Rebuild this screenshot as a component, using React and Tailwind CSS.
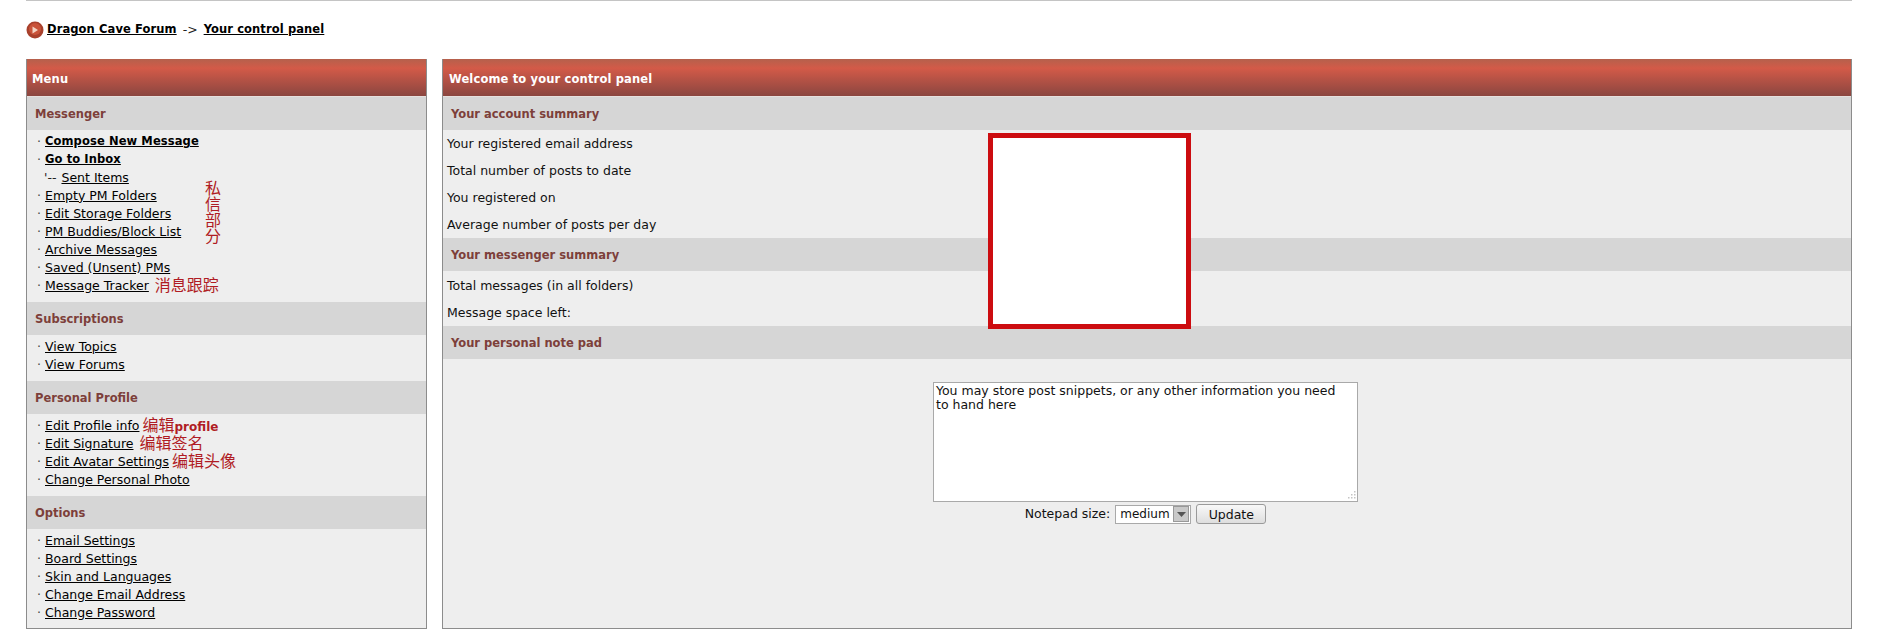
import React from 'react';

const sansFont = "font-['DejaVu_Sans','Noto_Sans_CJK_SC',sans-serif]";

const Link = ({ children, bold }) => (
    <a className={`text-black underline ${bold ? 'text-[11.5px] font-bold tracking-[0.1px]' : ''}`}>{children}</a>
);

const Note = ({ children, gap = 'ml-[6px]' }) => (
    <span className={`${gap} text-[16px] leading-[14px] text-[#b01c24]`}>{children}</span>
);

const MenuItem = ({ children, bold, note, noteGap }) => (
    <div className="flex h-[18px] items-center whitespace-nowrap pl-[10px]">
        <span className="w-[8px] text-[#444]">·</span>
        <Link bold={bold}>{children}</Link>
        {note && <Note gap={noteGap}>{note}</Note>}
    </div>
);

const SubHeader = ({ children, className = '' }) => (
    <div className={`flex h-[33px] items-center bg-[#d6d6d6] pl-[8px] pt-[3px] text-[11.5px] font-bold text-[#7d3f3a] ${className}`}>{children}</div>
);

const PanelHeader = ({ children, className = '' }) => (
    <div className={`flex h-[38px] items-center border-b border-[#e6e0de] bg-gradient-to-b from-[#b5604c] from-0% via-[#d35a48] via-25% to-[#8b4640] to-100% pt-[4px] text-[11.5px] font-bold tracking-[0.15px] text-white ${className}`}>{children}</div>
);

const Row = ({ children, className = 'h-[27px]' }) => (
    <div className={`flex items-center pl-[4px] text-[#111] ${className}`}>{children}</div>
);

export default function App() {
    return (
        <div className={`relative h-[634px] w-[1878px] overflow-hidden bg-white px-[26px] text-[12.5px] ${sansFont}`}>
            <div className="h-[1px] w-full bg-[#c4c4c4]" />

            <div className="flex h-[58px] items-center">
                <svg width="18" height="18" viewBox="0 0 18 18" className="mr-[3px] shrink-0">
                    <circle cx="9" cy="9" r="8.5" fill="#a8402c" />
                    <circle cx="9" cy="8" r="6" fill="#c9533a" />
                    <path d="M6.5 5.5 L12 9 L6.5 12.5 Z" fill="#f3d4c4" />
                </svg>
                <Link bold>Dragon Cave Forum</Link>
                <span className="mx-[6px] text-[#222]">-&gt;</span>
                <Link bold>Your control panel</Link>
            </div>

            <div className="flex gap-[15px]">
                <div className="flex h-[570px] w-[401px] shrink-0 flex-col border-x border-b border-[#8c8c8c] bg-[#eeeeee]">
                    <PanelHeader className="pl-[5px]">Menu</PanelHeader>
                    <SubHeader>Messenger</SubHeader>
                    <div className="pt-[3px]">
                        <MenuItem bold>Compose New Message</MenuItem>
                        <MenuItem bold>Go to Inbox</MenuItem>
                        <div className="flex h-[18px] items-center pl-[17px]">
                            <span className="mr-[5px] text-[#222]">'--</span>
                            <Link>Sent Items</Link>
                        </div>
                        <MenuItem>Empty PM Folders</MenuItem>
                        <MenuItem>Edit Storage Folders</MenuItem>
                        <MenuItem>PM Buddies/Block List</MenuItem>
                        <MenuItem>Archive Messages</MenuItem>
                        <MenuItem>Saved (Unsent) PMs</MenuItem>
                        <MenuItem note="消息跟踪">Message Tracker</MenuItem>
                    </div>
                    <SubHeader className="mt-[7px]">Subscriptions</SubHeader>
                    <div className="pt-[3px]">
                        <MenuItem>View Topics</MenuItem>
                        <MenuItem>View Forums</MenuItem>
                    </div>
                    <SubHeader className="mt-[7px]">Personal Profile</SubHeader>
                    <div className="pt-[3px]">
                        <MenuItem note={<>编辑<b className="text-[12px]">profile</b></>} noteGap="ml-[3px]">Edit Profile info</MenuItem>
                        <MenuItem note="编辑签名">Edit Signature</MenuItem>
                        <MenuItem note="编辑头像" noteGap="ml-[3px]">Edit Avatar Settings</MenuItem>
                        <MenuItem>Change Personal Photo</MenuItem>
                    </div>
                    <SubHeader className="mt-[7px]">Options</SubHeader>
                    <div className="pt-[3px]">
                        <MenuItem>Email Settings</MenuItem>
                        <MenuItem>Board Settings</MenuItem>
                        <MenuItem>Skin and Languages</MenuItem>
                        <MenuItem>Change Email Address</MenuItem>
                        <MenuItem>Change Password</MenuItem>
                    </div>
                </div>

                <div className="flex h-[570px] min-w-0 flex-1 flex-col border-x border-b border-[#8c8c8c] bg-[#eeeeee]">
                    <PanelHeader className="pl-[6px]">Welcome to your control panel</PanelHeader>
                    <SubHeader>Your account summary</SubHeader>
                    <div className="pt-[1px]">
                        <Row>Your registered email address</Row>
                        <Row>Total number of posts to date</Row>
                        <Row>You registered on</Row>
                        <Row className="h-[26px]">Average number of posts per day</Row>
                    </div>
                    <SubHeader>Your messenger summary</SubHeader>
                    <div className="pt-[2px]">
                        <Row>Total messages (in all folders)</Row>
                        <Row className="h-[26px]">Message space left:</Row>
                    </div>
                    <SubHeader>Your personal note pad</SubHeader>
                    <div className="flex flex-col items-center pt-[23px]">
                        <div className="relative ml-[-3px] h-[120px] w-[425px]">
                            <textarea
                                readOnly
                                className="h-full w-full resize-none border border-[#a9a9a9] bg-white py-[1px] pl-[2px] pr-[6px] text-[12.5px] leading-[14px] text-[#111]"
                                defaultValue="You may store post snippets, or any other information you need to hand here"
                            />
                            <svg width="10" height="10" viewBox="0 0 10 10" className="absolute bottom-[2px] right-[2px]">
                                <path d="M8 1h1.5v1.5H8zM5 4h1.5v1.5H5zM8 4h1.5v1.5H8zM2 7h1.5v1.5H2zM5 7h1.5v1.5H5zM8 7h1.5v1.5H8z" fill="#c4c4c4" />
                            </svg>
                        </div>
                        <div className="ml-[-3px] mt-[2px] flex items-center text-[#111]">
                            <span className="mr-[5px]">Notepad size:</span>
                            <span className="flex h-[19px] w-[76px] items-center justify-between border border-[#a9a9a9] bg-white pl-[4px] pr-[1px] text-[12px]">
                                medium
                                <span className="flex h-[16px] w-[16px] items-center justify-center border border-[#999] bg-[#c9c9c9]">
                                    <svg width="9" height="5" viewBox="0 0 9 5"><path d="M0 0h9L4.5 5z" fill="#555" /></svg>
                                </span>
                            </span>
                            <button className="ml-[5px] h-[20px] w-[70px] rounded-[3px] border border-[#9a9a9a] bg-gradient-to-b from-[#f8f8f8] to-[#dedede] pt-[1px] text-[12.5px] text-[#111]">Update</button>
                        </div>
                    </div>
                </div>
            </div>

            {/* hand-drawn annotations over the screenshot */}
            <div className="absolute left-[205px] top-[181px] flex w-[16px] flex-col text-center text-[16px] leading-[16px] text-[#b01c24]">
                <span>私</span><span>信</span><span>部</span><span>分</span>
            </div>
            <div className="absolute left-[988px] top-[133px] h-[196px] w-[203px] border-[5px] border-[#cc0c10] bg-white" />
        </div>
    );
}
